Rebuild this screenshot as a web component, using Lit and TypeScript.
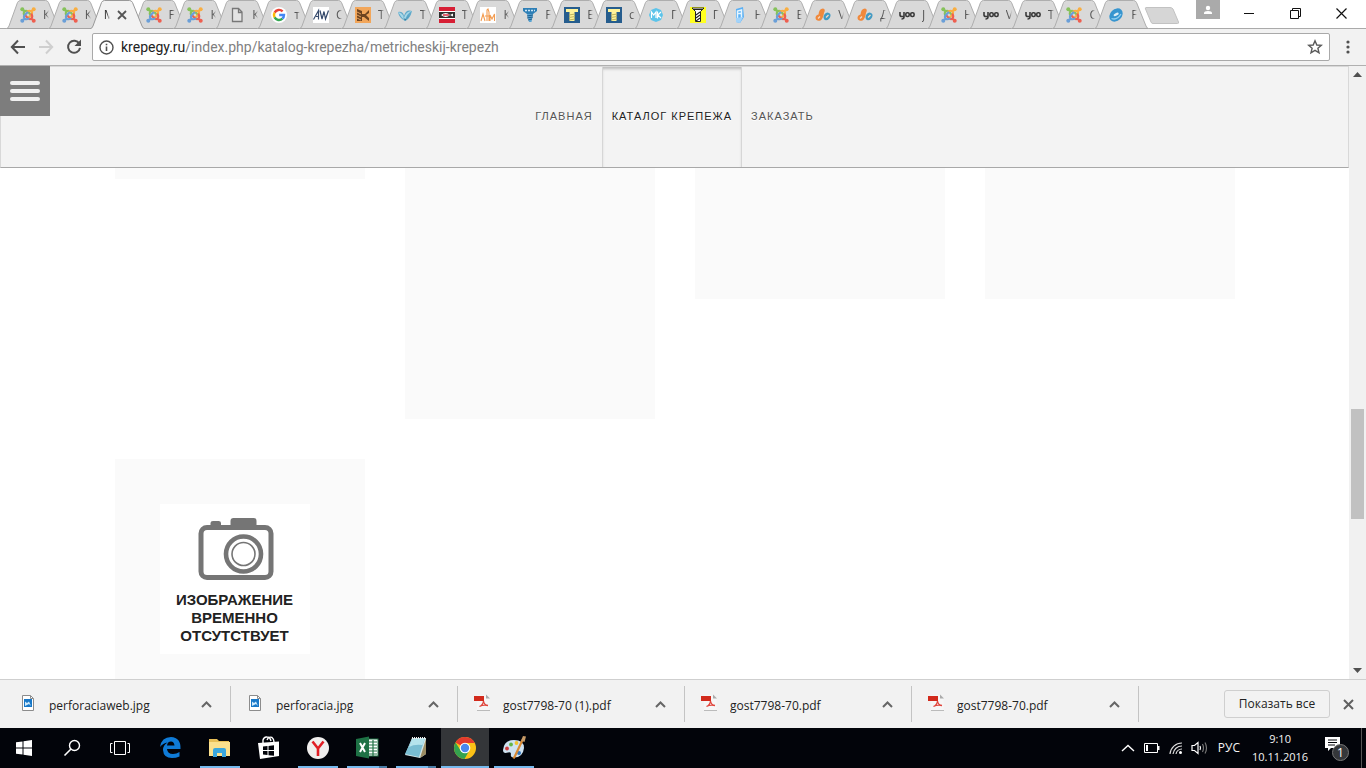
import { LitElement, html, svg, css } from "lit";
import { customElement, property } from "lit/decorators.js";
import { classMap } from "lit/directives/class-map.js";

const joomlaArm = (color: string, turn: number) => svg`<g transform="rotate(${turn} 8 8)">
  <path d="M2.7 2.7 L4.6 4.6 M4.4 8.6 Q3 6.2 4.6 4.6 Q6 3.2 8 4.8 L10.6 7.400" fill="none" stroke=${color} stroke-width="2.100" stroke-linecap="round"/>
  <circle cx="2.300" cy="2.300" r="2" fill=${color}/></g>`;

const glyphs: Record<string, unknown> = {
  joomla: svg`${joomlaArm("#86c25a", 0)}${joomlaArm("#f9ae41", 90)}${joomlaArm("#ee5f50", 180)}${joomlaArm("#6a9fd8", 270)}`,
  doc: svg`<path d="M3.5 1.5 h6 l3.5 3.5 v9.5 h-9.5z M9.5 1.5 v4 h3.5" fill="#e4e4e4" stroke="#777" stroke-width="1.3"/>`,
  google: svg`<circle cx="8" cy="8" r="8" fill="#fff"/><g fill="none" stroke-width="2.4">
    <path stroke="#ea4335" d="M3.6 5.6 A5 5 0 0 1 11.6 4.4"/><path stroke="#fbbc05" d="M3.6 5.6 A5 5 0 0 0 3.6 10.4"/>
    <path stroke="#34a853" d="M3.6 10.4 A5 5 0 0 0 11.4 11.7"/><path stroke="#4285f4" d="M11.4 11.7 A5 5 0 0 0 13 8 H8.2"/></g>`,
  aw: svg`<rect width="16" height="16" fill="#fff"/><path d="M0.500 12.500 L5.500 3.500 V12.500 M3 9.500 H5.500 M7 3.500 L9 12 L11 4.500 L12.500 12 L15.500 3.500" fill="none" stroke="#35496b" stroke-width="1.200"/>`,
  wood: svg`<rect width="16" height="16" fill="#f2a65a"/><path d="M2 2 L7 4 V14 H2z M7 7 H10 L14 3 V6 L11 8 L14 11 V14 L9 10 H7z" fill="#6e4420"/><path d="M2 5 L6 7 M2 8 L6 10 M2 11 L6 13" stroke="#e7a35f"/>`,
  bird: svg`<path d="M1 5 Q6 4 7 9 Q9 2 15 4 Q13 12 8 14 Q2 11 1 5z" fill="#5fa9ca"/><path d="M1 5 Q6 6 7 11 Q9 4 15 4 Q9 7 8 14 Q4 10 1 5z" fill="#a8d8e8"/><path d="M6 10 Q9 15 12 8 L8 14z" fill="#377c9e"/>`,
  stop: svg`<rect width="16" height="16" fill="#d71f35"/><rect y="4" width="16" height="8" fill="#fff"/><rect y="5" width="16" height="6" fill="#303030"/><path d="M2 8 Q7 4 11 8 L14 6.5 V9.5 L11 8 Q7 12 2 8z" fill="#fff"/><path d="M4 8 H10" stroke="#d71f35" stroke-width="1.4"/>`,
  atm: svg`<rect width="16" height="16" fill="#fff"/><path d="M1 14 L3 7 L5 14 M5 9 H9 M7 14 V3 L8 2 L9 5 V14 M10 14 V8 L12 12 L14.5 7 V14" fill="none" stroke="#f39c50" stroke-width="1.1"/>`,
  bestscrew: svg`<path d="M1 1 H15 V4 L11 7 H5 L1 4z" fill="#2e7fb6"/><path d="M5 7 H11 L9.5 15 H7z" fill="#5aa4d2"/><path d="M5 9 L11 8 M5 11 L11 10 M6 13 L10 12" stroke="#1d5e8e"/><path d="M3 3.5 H13" stroke="#cfe6f5" stroke-width="1.4" stroke-dasharray="2 1"/>`,
  bolt: svg`<rect width="16" height="16" fill="#265d8e"/><path d="M2 2 H14 V5 H10.5 V14 H5.5 V5 H2z" fill="#fff49a"/><path d="M5 8 L11 7 M5 10.5 L11 9.5 M5 13 L11 12" stroke="#bfb45c"/>`,
  mk: svg`<path d="M8 1 L13 3 L15 8 L13 13 L8 15 L3 13 L1 8 L3 3z" fill="#5cc4ea"/><path d="M3.5 11 V5 L5.7 8 L8 5 V11 M9.5 4.5 V11.5 M13 5 L9.8 8 L13 11" fill="none" stroke="#fff" stroke-width="1.2"/>`,
  yellow: svg`<rect width="16" height="16" fill="#ffff20"/><path d="M2 1 H14 L10.5 4.5 V14.5 H5.5 V4.5z" fill="#fff" stroke="#222"/><path d="M6 8 L10 5 M6 11 L10 8 M6 14 L10 11 M4 2.5 H12" stroke="#222" stroke-width="1.1"/>`,
  bluebox: svg`<path d="M4 2 L11 0 L12 10 L8 16 L4 15z" fill="#5bb0f4"/><path d="M5.5 12 V4 L9.5 3 V11 M5.5 6.5 H10" stroke="#e6f5ff" stroke-width="1.5" fill="none"/><path d="M4 11 L11 10 L8 16 L4 15z" fill="#a2d3fa"/>`,
  joined: svg`<path d="M0.500 11 Q0.500 8 3.500 7.500 Q4 1.500 8 1.500 Q11 2 9 6 Q8 12 5.500 13.500 Q1 14.500 0.500 11z" fill="#f0893c"/><path d="M8.500 10 Q9 6 12.500 5.500 Q16 6 15.500 9 Q14.500 13 11 13.300 Q8.500 13 8.500 10z" fill="#439bc4"/><path d="M3 11.500 L5 9.500 M11 10.500 L13.500 8" stroke="#f4d9c4" stroke-width="1.300"/>`,
  yoo: svg`<path d="M1 5 V8 Q1 9.5 3 9.5 H5 M5 5 V10 Q5 12 2.5 12" fill="none" stroke="#3a3a3a" stroke-width="1.6"/><rect x="6.8" y="5.7" width="3.4" height="3.8" rx="1.4" fill="none" stroke="#3a3a3a" stroke-width="1.6"/><rect x="11.7" y="5.7" width="3.4" height="3.8" rx="1.4" fill="none" stroke="#3a3a3a" stroke-width="1.6"/>`,
  swirl: svg`<ellipse cx="8" cy="8" rx="7.400" ry="5.800" fill="#3795cf" transform="rotate(-45 8 8)"/><ellipse cx="8.400" cy="7.500" rx="2.800" ry="1.300" fill="#ddedf5" transform="rotate(-25 8 8)"/><path d="M3.500 11.500 Q9 13.500 13 7" stroke="#8fd0f2" stroke-width="1.300" fill="none"/>`,
};

const TABS: [string, string][] = [
  ["joomla", "К"], ["joomla", "К"], ["", "М"], ["joomla", "F"], ["joomla", "К"], ["doc", "К"], ["google", "т"],
  ["aw", "С"], ["wood", "Т"], ["bird", "Т"], ["stop", "Т"], ["atm", "К"], ["bestscrew", "F"], ["bolt", "Е"],
  ["bolt", "с"], ["mk", "Г"], ["yellow", "Г"], ["bluebox", "Н"], ["joomla", "Е"], ["joined", "V"], ["joined", "Д"],
  ["yoo", "J"], ["joomla", "Н"], ["yoo", "V"], ["yoo", "Т"], ["joomla", "С"], ["swirl", "F"],
];

const UI_FONT = css`"Open Sans", "Noto Sans", sans-serif`;

@customElement("browser-tabs")
class BrowserTabs extends LitElement {
  static styles = css`
    :host { display: flex; height: 29px; background: #fff; box-shadow: inset 0 -1px #aaa; font: 12px/16px ${UI_FONT}; }
    .tabs { display: flex; flex: 0 1 1130px; min-width: 0; margin-left: 6px; }
    .tab { position: relative; flex: 1 1 0; min-width: 0; height: 29px; padding: 0; border: 0; background: none;
      display: flex; align-items: center; font: inherit; color: #555; }
    .shape { position: absolute; left: 0; top: 0; width: 55px; height: 29px; pointer-events: none; }
    .body { fill: #d9d9d9; stroke: #aeaeae; }
    .base { stroke: #a4a4a4; }
    .active { z-index: 1; }
    .active .body { fill: #f2f2f2; stroke: #999; }
    .fav { position: relative; flex: none; width: 16px; height: 16px; margin-left: 14px; }
    .title { position: relative; flex: none; width: 10px; margin-left: 7px; text-align: left;
      -webkit-mask-image: linear-gradient(90deg, #000 3px, transparent 6px); mask-image: linear-gradient(90deg, #000 3px, transparent 6px); }
    .active .title { margin-left: 14px; color: #333; }
    .cross { position: relative; flex: none; width: 10px; height: 10px; margin-left: 3px; }
    .new { flex: none; width: 36px; height: 19px; margin: 6px 0 0 8px; padding: 0; border: 0; background: none; }
    .new svg, .win svg { display: block; }
    .grow { flex: 1; }
    .user { flex: none; width: 24px; height: 19px; margin-right: 6px; padding: 0; border: 0; background: #aaa; display: grid; place-items: center; }
    .win { flex: none; width: 46px; height: 27px; padding: 0; border: 0; background: none; display: grid; place-items: center; }
    .win:last-child { margin-right: 2px; }
    .win svg { width: 11px; height: 11px; fill: none; stroke: #111; }
  `;
  render() {
    return html`
      <div class="tabs" role="tablist">
        ${TABS.map(([icon, letter], i) => html`
          <button class=${classMap({ tab: true, active: i === 2 })} role="tab" aria-selected=${i === 2}>
            <svg class="shape" viewBox="0 0 55 29">
              <path class="body" d="M0 29 Q2 28.500 3 26 L11.500 2.500 Q12.500 0.500 14.500 0.500 H39.500 Q41.500 0.500 42.500 2.500 L52 26 Q53 28.500 55 29"/>
              ${i === 2 ? null : svg`<path class="base" d="M1 28.500 H54"/>`}
            </svg>
            ${icon ? html`<svg class="fav" viewBox="0 0 16 16">${glyphs[icon]}</svg>` : null}
            <span class="title">${letter}</span>
            ${i === 2 ? html`<svg class="cross" viewBox="0 0 10 10"><path d="M1 1 L9 9 M9 1 L1 9" stroke="#555" stroke-width="1.800"/></svg>` : null}
          </button>`)}
      </div>
      <button class="new" aria-label="+"><svg width="36" height="19" viewBox="0 0 36 19"><path d="M2 1.500 H26 Q28 1.500 29 3 L34.500 16 Q35 17.500 33.500 17.500 H9 Q7.500 17.500 7 16 L1.500 3 Q1 1.500 2 1.500z" fill="#d6d6d6" stroke="#c2c2c2"/></svg></button>
      <span class="grow"></span>
      <button class="user" aria-label="User"><svg width="10" height="10" viewBox="0 0 10 10" fill="#fff"><circle cx="5" cy="3" r="2.200"/><path d="M1 9 V8 Q1 6 5 6 Q9 6 9 8 V9z"/></svg></button>
      <button class="win" aria-label="Minimize"><svg viewBox="0 0 11 11"><path d="M0 5.500 H10"/></svg></button>
      <button class="win" aria-label="Restore"><svg viewBox="0 0 11 11"><path d="M0.500 2.500 H8.500 V10.500 H0.500z M2.500 2.500 V0.500 H10.500 V8.500 H8.500"/></svg></button>
      <button class="win" aria-label="Close"><svg viewBox="0 0 11 11"><path d="M0.500 0.500 L10.500 10.500 M10.500 0.500 L0.500 10.500" stroke-width="1.200"/></svg></button>`;
  }
}

@customElement("browser-toolbar")
class BrowserToolbar extends LitElement {
  static styles = css`
    :host { display: flex; align-items: center; height: 37px; box-sizing: border-box; padding: 0 8px 0 8px;
      background: #f2f2f2; border-bottom: 1px solid #b0b0b0; font: 14px/20px Roboto, ${UI_FONT}; }
    button { flex: none; padding: 0; border: 0; background: none; display: grid; place-items: center; }
    .nav { width: 20px; height: 20px; margin-right: 8px; }
    .box { flex: 1; min-width: 0; height: 28px; box-sizing: border-box; display: flex; align-items: center;
      background: #fff; border: 1px solid #a9a9a9; border-radius: 2px; padding: 0 6px; }
    .info { margin-right: 7px; }
    .host { color: #222; }
    .path { flex: 1; min-width: 0; padding: 0; border: 0; outline: 0; background: none; font: inherit; color: #808080; }
    .menu { width: 20px; height: 20px; margin-left: 8px; }
  `;
  render() {
    return html`
      <button class="nav" aria-label="Back"><svg width="16" height="16" viewBox="0 0 16 16"><path d="M8 1.500 L1.800 8 L8 14.500 M2 8 H15" fill="none" stroke="#505050" stroke-width="2"/></svg></button>
      <button class="nav" aria-label="Forward"><svg width="16" height="16" viewBox="0 0 16 16"><path d="M8 1.500 L14.200 8 L8 14.500 M14 8 H1" fill="none" stroke="#cfcfcf" stroke-width="2"/></svg></button>
      <button class="nav" aria-label="Reload"><svg width="16" height="16" viewBox="0 0 16 16"><path d="M13.300 4.800 A6 6 0 1 0 14 8.800" fill="none" stroke="#505050" stroke-width="2"/><path d="M15 0.500 V7 H8.500z" fill="#505050"/></svg></button>
      <div class="box">
        <button class="info" aria-label="Info"><svg width="15" height="15" viewBox="0 0 15 15"><circle cx="7.500" cy="7.500" r="6.500" fill="none" stroke="#505050" stroke-width="1.400"/><path d="M7.500 6.500 V11 M7.500 3.700 V5.200" stroke="#505050" stroke-width="1.600"/></svg></button>
        <label class="host" for="url">krepegy.ru</label><input class="path" id="url" value="/index.php/katalog-krepezha/metricheskij-krepezh">
        <button aria-label="Bookmark"><svg width="16" height="16" viewBox="0 0 16 16"><path d="M8 1.800 L9.800 6 L14.400 6.300 L10.900 9.300 L12 13.800 L8 11.300 L4 13.800 L5.100 9.300 L1.600 6.300 L6.200 6z" fill="none" stroke="#5a5a5a" stroke-width="1.400"/></svg></button>
      </div>
      <button class="menu" aria-label="Menu"><svg width="4" height="14" viewBox="0 0 4 14" fill="#505050"><circle cx="2" cy="2" r="1.600"/><circle cx="2" cy="7" r="1.600"/><circle cx="2" cy="12" r="1.600"/></svg></button>`;
  }
}

@customElement("site-page")
class SitePage extends LitElement {
  static styles = css`
    :host { display: flex; min-height: 0; background: #fff; font-family: "Liberation Sans", Arial, sans-serif; }
    .view { flex: 1; min-width: 0; display: flex; flex-direction: column; overflow: hidden; }
    header { position: relative; flex: none; display: flex; justify-content: center; height: 102px; box-sizing: border-box;
      background: #f3f3f3; border: 1px solid #d8d8d8; border-bottom-color: #a8a8a8; }
    .burger { position: absolute; left: -1px; top: -1px; width: 50px; height: 50px; padding: 0; border: 0; background: #7d7d7d;
      display: flex; flex-direction: column; gap: 4px; align-items: center; justify-content: center; }
    .bar { width: 30px; height: 4px; border-radius: 2px; background: #f0f0f0; }
    nav { display: flex; }
    nav a { display: flex; align-items: center; padding: 0 9px 2px; font-size: 11px; line-height: 16px; letter-spacing: 1px; color: #555;
      text-decoration: none; text-shadow: 0 1px 0 #fff; }
    nav .current { color: #222; border: 1px solid #d6d6d6; border-width: 0 1px; box-shadow: inset 0 3px 3px -1px #bbb; }
    main { flex: 1; min-height: 0; overflow: hidden; }
    .grid { display: grid; grid-template-columns: repeat(4, minmax(0, 1fr)); gap: 40px; align-items: start;
      max-width: 1120px; margin: 0 auto; }
    .card { background: #fafafa; box-sizing: border-box; }
    .short { height: 11px; } .tall { height: 251px; } .mid { height: 131px; }
    .item { padding: 45px 45px 120px; }
    figure { margin: 0; width: 150px; height: 150px; background: #fff; }
    figure svg { display: block; }
    figcaption { font-size: 15px; line-height: 18px; font-weight: bold; text-align: center; color: #222; }
    .scroll { flex: none; width: 17px; display: grid; grid-template-rows: 17px 326fr 110fr 143fr 17px; background: #f1f1f1; }
    .arrow { padding: 0; border: 0; background: none; display: grid; place-items: center; }
    .thumb { grid-row: 3; margin: 0 2px; background: #c1c1c1; }
    .down { grid-row: 5; }
  `;
  render() {
    return html`
      <div class="view">
        <header>
          <button class="burger" aria-label="Menu"><span class="bar"></span><span class="bar"></span><span class="bar"></span></button>
          <nav><a href="#">ГЛАВНАЯ</a><a href="#" class="current">КАТАЛОГ КРЕПЕЖА</a><a href="#">ЗАКАЗАТЬ</a></nav>
        </header>
        <main>
          <div class="grid">
            <div class="card short"></div><div class="card tall"></div><div class="card mid"></div><div class="card mid"></div>
            <div class="card item">
              <figure>
                <svg width="150" height="87" viewBox="0 0 150 87" fill="none" stroke="#757575">
                  <rect x="41" y="23.500" width="70" height="50" rx="6" stroke-width="5"/>
                  <path d="M70.500 23 V17 Q70.500 14 73.500 14 H93.500 Q96.500 14 96.500 17 V23z M50.500 22 V19 Q50.500 17 53 17 H58.500 Q61 17 61 19 V22z" fill="#757575" stroke="none"/>
                  <circle cx="83.500" cy="50" r="17.500" fill="#fff" stroke-width="4.600"/><circle cx="83.500" cy="50" r="11.500" stroke-width="1.600"/>
                </svg>
                <figcaption>ИЗОБРАЖЕНИЕ<br>ВРЕМЕННО<br>ОТСУТСТВУЕТ</figcaption>
              </figure>
            </div>
          </div>
        </main>
      </div>
      <div class="scroll">
        <button class="arrow" aria-label="Up"><svg width="9" height="5" viewBox="0 0 9 5"><path d="M0 5 L4.500 0 L9 5z" fill="#505050"/></svg></button>
        <div class="thumb"></div>
        <button class="arrow down" aria-label="Down"><svg width="9" height="5" viewBox="0 0 9 5"><path d="M0 0 L4.500 5 L9 0z" fill="#505050"/></svg></button>
      </div>`;
  }
}

@customElement("download-item")
class DownloadItem extends LitElement {
  @property() name = "";
  static styles = css`
    :host { flex: 0 1 227px; min-width: 0; box-sizing: border-box; height: 36px; padding: 0 18px 0 16px; display: flex; align-items: center;
      border-right: 1px solid #c4c4c4; }
    .icon { flex: none; margin: 0 13px 3px 0; }
    .name { flex: 1; min-width: 0; padding: 3px 0 0; border: 0; background: none; text-align: left; font: 12px/18px ${UI_FONT}; color: #222;
      white-space: nowrap; overflow: hidden; }
    .more { flex: none; padding: 0; border: 0; background: none; display: grid; }
  `;
  render() {
    const pdf = this.name.endsWith("pdf");
    return html`
      <svg class="icon" width="16" height="18" viewBox="0 0 16 18">${pdf
        ? svg`<path d="M3 1 H12 L15.500 4.500 V16 H3z" fill="#f6f6f6"/><path d="M3 16.500 H16" stroke="#bbb"/><path d="M12 0.500 V4.500 H16z" fill="#aaa"/><rect y="2" width="10" height="5" fill="#d22a1c"/><path d="M5.500 12.500 Q9 11 9.500 7 Q10 11 14 11.500 Q9 10.500 5.500 12.500z" fill="none" stroke="#e0453c" stroke-width="1.300"/>`
        : svg`<path d="M2.500 1.500 H10.500 L13.500 4.500 V16.500 H2.500z" fill="#fff" stroke="#8c8c8c"/><path d="M10.500 1.500 V4.500 H13.500" fill="none" stroke="#8c8c8c"/><rect x="4" y="5" width="8" height="8" fill="#1878c8"/><path d="M5 12 V7.500 L7 9 L9 7.500 L11 12 L9 10z" fill="#cfeafc"/>`}</svg>
      <button class="name">${this.name}</button>
      <button class="more" aria-label="Options"><svg width="11" height="7" viewBox="0 0 11 7"><path d="M1 6 L5.500 1.500 L10 6" fill="none" stroke="#666" stroke-width="2"/></svg></button>`;
  }
}

@customElement("download-bar")
class DownloadBar extends LitElement {
  static styles = css`
    :host { display: flex; align-items: center; height: 49px; box-sizing: border-box; padding: 0 12px 0 4px; background: #f2f2f2;
      border-top: 1px solid #cfcfcf; }
    .grow { flex: 1; }
    .all { flex: none; box-sizing: border-box; width: 106px; height: 28px; padding: 0; border: 1px solid #cfcfcf; border-radius: 3px; background: #f2f2f2;
      font: 12px/18px ${UI_FONT}; color: #222; white-space: nowrap; }
    .close { flex: none; margin-left: 13px; padding: 0; border: 0; background: none; display: grid; }
  `;
  render() {
    return html`
      ${["perforaciaweb.jpg", "perforacia.jpg", "gost7798-70 (1).pdf", "gost7798-70.pdf", "gost7798-70.pdf"].map((n) => html`<download-item .name=${n}></download-item>`)}
      <span class="grow"></span>
      <button class="all">Показать все</button>
      <button class="close" aria-label="Close"><svg width="11" height="11" viewBox="0 0 11 11"><path d="M1 1 L10 10 M10 1 L1 10" stroke="#606060" stroke-width="2"/></svg></button>`;
  }
}

const apps = [
  { n: "Edge", s: "", g: svg`<path d="M1 11 Q2.500 1 12 1 Q22 1.500 21.500 13 H8 Q8.500 18 14 18 Q17.500 18 20.500 16 V20.500 Q17 22 13 22 Q4.500 22 4 14 Q4 9 8.500 6.500 Q4 7 1 11z M8 9.500 H15.500 Q15 5.500 12 5.500 Q8.500 5.500 8 9.500z" fill="#0f7bd7" fill-rule="evenodd"/>` },
  { n: "Explorer", s: "run", g: svg`<path d="M1 3 H9 L11 5 H21 V20 H1z" fill="#e8bf57"/><path d="M1 6 H22 V20 H1z" fill="#fbe08d"/><path d="M5 21 V14 Q5 12 7 12 H16 Q18 12 18 14 V21 H14 V17 H9 V21z" fill="#3aa6dd"/>` },
  { n: "Store", s: "", g: svg`<path d="M1 7 L22 5.500 V20 L3 23z" fill="#fff"/><path d="M6 7 V4 Q7 0.500 10 1 Q13 1 14 5 M10 4 Q12 0 15 1.500 Q17 3 17 6" fill="none" stroke="#fff" stroke-width="1.400"/><path d="M6 10.500 L10.500 10 V14 H6z M11.500 10 L17 9.200 V14 H11.500z M6 15 H10.500 V19 L6 18.500z M11.500 15 H17 V19.700 L11.500 19.200z" fill="#02040a"/>` },
  { n: "Yandex", s: "run", g: svg`<circle cx="12" cy="12" r="11" fill="#f0efee"/><path d="M6.500 5.500 L12 12.500 L17.500 5.500 M12 12 V20" fill="none" stroke="#e01e25" stroke-width="2.600"/>` },
  { n: "Excel", s: "run split", g: svg`<rect x="12" y="3" width="11" height="17" fill="#fff" stroke="#217346"/><path d="M14 6 H22 M14 9 H22 M14 12 H22 M14 15 H22 M14 18 H22 M18 4 V20" stroke="#217346" stroke-width="1.200"/><path d="M1 3 L14 0.500 V22.500 L1 20z" fill="#1e7145"/><path d="M5 7 L10 16 M10 7 L5 16" stroke="#fff" stroke-width="2"/>` },
  { n: "Notepad", s: "run split", g: svg`<path d="M8 2 H22 L22 18 L16 22 L1 19z" fill="#d4e6e8"/><path d="M8 3 L21 2 L15 21 L1 18z" fill="#79bdd2"/><path d="M8 3 L21 2 L18.500 9 Q10 8 5 11z" fill="#b5e3ec"/><path d="M22 3 V18 L16 22z" fill="#9b8c63"/><path d="M8 2 L21 2" stroke="#eee" stroke-width="2" stroke-dasharray="1 1"/>` },
  { n: "Chrome", s: "run on", g: svg`<circle cx="12" cy="12" r="11" fill="#fbc116"/><path d="M12 12 L2.500 6.500 A11 11 0 0 1 21.800 7 H12z" fill="#e33b2e"/><path d="M2.500 6.500 A11 11 0 0 0 11.500 23 L16.300 14.500 L12 12 L7.700 14.500z" fill="#34a34f"/><circle cx="12" cy="12" r="5.300" fill="#fff"/><circle cx="12" cy="12" r="4.200" fill="#4a88ee"/>` },
  { n: "Paint", s: "run", g: svg`<path d="M1 14 Q2 4 12 4 Q22 4 22 12 Q21 22 11 21.500 Q8 21 9 18 Q9 15.500 6 16.500 Q1 18 1 14z" fill="#cfe2f0"/><circle cx="5" cy="12.500" r="1.900" fill="#cf3c3c"/><circle cx="9" cy="8.500" r="1.900" fill="#63b545"/><circle cx="14.500" cy="7" r="1.900" fill="#f2c22e"/><circle cx="17" cy="17" r="2" fill="#3276bd"/><path d="M20.500 4 L13 20 L11.500 22.500" stroke="#d98a34" stroke-width="2.200" fill="none"/><path d="M19 4.500 L21 0 L24 0.500 L22.500 6z" fill="#c69a67"/>` },
];

@customElement("task-bar")
class TaskBar extends LitElement {
  static styles = css`
    :host { display: flex; height: 40px; background: #02040a; color: #f4f4f4; font: 12px/18px ${UI_FONT}; }
    button { flex: none; padding: 0; border: 0; background: none; color: inherit; font: inherit; display: grid; place-items: center; }
    .sys { width: 48px; }
    .apps { display: flex; gap: 1px; margin-left: 3px; flex: 1; min-width: 0; overflow: hidden; }
    .app { width: 48px; }
    .run { background: linear-gradient(#76b9ed, #76b9ed) bottom / 40px 2px no-repeat; }
    .split { background: linear-gradient(90deg, #76b9ed 32px, #4a7da6 32px) bottom / 40px 2px no-repeat; }
    .on { background: linear-gradient(#76b9ed, #76b9ed) bottom / 48px 2px no-repeat #343639; }
    .tray { display: flex; align-items: center; gap: 8px; }
    .lang { margin: 0 4px 0 2px; }
    .clock { font-size: 11px; text-align: center; width: 56px; margin-right: 8px; white-space: nowrap; }
    .note { margin-right: 3px; }
    .edge { flex: none; width: 4px; height: 40px; border-left: 1px solid #555; }
    .count { font-size: 12px; fill: #fff; }
  `;
  render() {
    return html`
      <button class="sys" aria-label="Start"><svg width="16" height="16" viewBox="0 0 16 16"><path d="M0 2.300 L6.500 1.400 V7.500 H0z M7.500 1.200 L16 0 V7.500 H7.500z M0 8.500 H6.500 V14.600 L0 13.700z M7.500 8.500 H16 V16 L7.500 14.800z" fill="#fff"/></svg></button>
      <button class="sys" aria-label="Search"><svg width="18" height="18" viewBox="0 0 18 18"><circle cx="11.500" cy="6.500" r="5" fill="none" stroke="#fff" stroke-width="1.400"/><path d="M8 10 L1.500 16.500" stroke="#fff" stroke-width="1.600"/></svg></button>
      <button class="sys" aria-label="Task view"><svg width="20" height="14" viewBox="0 0 20 14"><path d="M4.500 0.500 H15.500 V13.500 H4.500z M2.500 2.500 H0.500 V11.500 H2.500 M17.500 2.500 H19.500 V11.500 H17.500" fill="none" stroke="#fff"/></svg></button>
      <div class="apps">${apps.map((a) => html`<button class="app ${a.s}" aria-label=${a.n}><svg width="24" height="24" viewBox="0 0 24 24">${a.g}</svg></button>`)}</div>
      <div class="tray">
        <button aria-label="Tray"><svg width="14" height="8" viewBox="0 0 14 8"><path d="M1 7 L7 1.500 L13 7" fill="none" stroke="#fff" stroke-width="1.400"/></svg></button>
        <svg width="18" height="10" viewBox="0 0 18 10"><path d="M1.500 0.500 H14.500 V9.500 H1.500z" fill="none" stroke="#fff"/><path d="M3 2 H5 V8 H3z M15 3 H16.500 V7 H15z" fill="#fff"/></svg>
        <svg width="14" height="14" viewBox="0 0 14 14" fill="none" stroke="#ddd" stroke-width="1.200"><path d="M1 13 A12 12 0 0 1 13 2 M4 13 A9 9 0 0 1 13 5 M7 13 A6 6 0 0 1 13 8"/><circle cx="11.500" cy="11.500" r="1.500" fill="#fff" stroke="none"/></svg>
        <svg width="17" height="14" viewBox="0 0 17 14" fill="none" stroke="#fff" stroke-width="1.200"><path d="M1 4.500 H3.500 L7 1.500 V12.500 L3.500 9.500 H1z M9 5 Q10 7 9 9"/><path d="M11.500 3 Q13.500 7 11.500 11 M14 1.500 Q17 7 14 12.500" stroke="#777"/></svg>
        <button class="lang">РУС</button>
        <button class="clock"><span>9:10</span><span>10.11.2016</span></button>
        <button class="note" aria-label="Notifications"><svg width="26" height="28" viewBox="0 0 26 28"><path d="M1 3 H16 V14 H7 L4 17 V14 H1z" fill="#fff"/><path d="M4 6 H13 M4 8.500 H13 M4 11 H11" stroke="#02040a"/><circle cx="16.500" cy="18.500" r="8" fill="#35373a" stroke="#777"/><text class="count" x="16.500" y="23" text-anchor="middle">1</text></svg></button>
        <span class="edge"></span>
      </div>`;
  }
}

@customElement("app-root")
class AppRoot extends LitElement {
  static styles = css`
    :host { display: flex; flex-direction: column; height: 100vh; overflow: hidden; background: #fff; }
    browser-tabs, browser-toolbar, download-bar, task-bar { flex: none; }
    site-page { flex: 1; }
  `;
  render() {
    return html`<browser-tabs></browser-tabs><browser-toolbar></browser-toolbar><site-page></site-page><download-bar></download-bar><task-bar></task-bar>`;
  }
}
